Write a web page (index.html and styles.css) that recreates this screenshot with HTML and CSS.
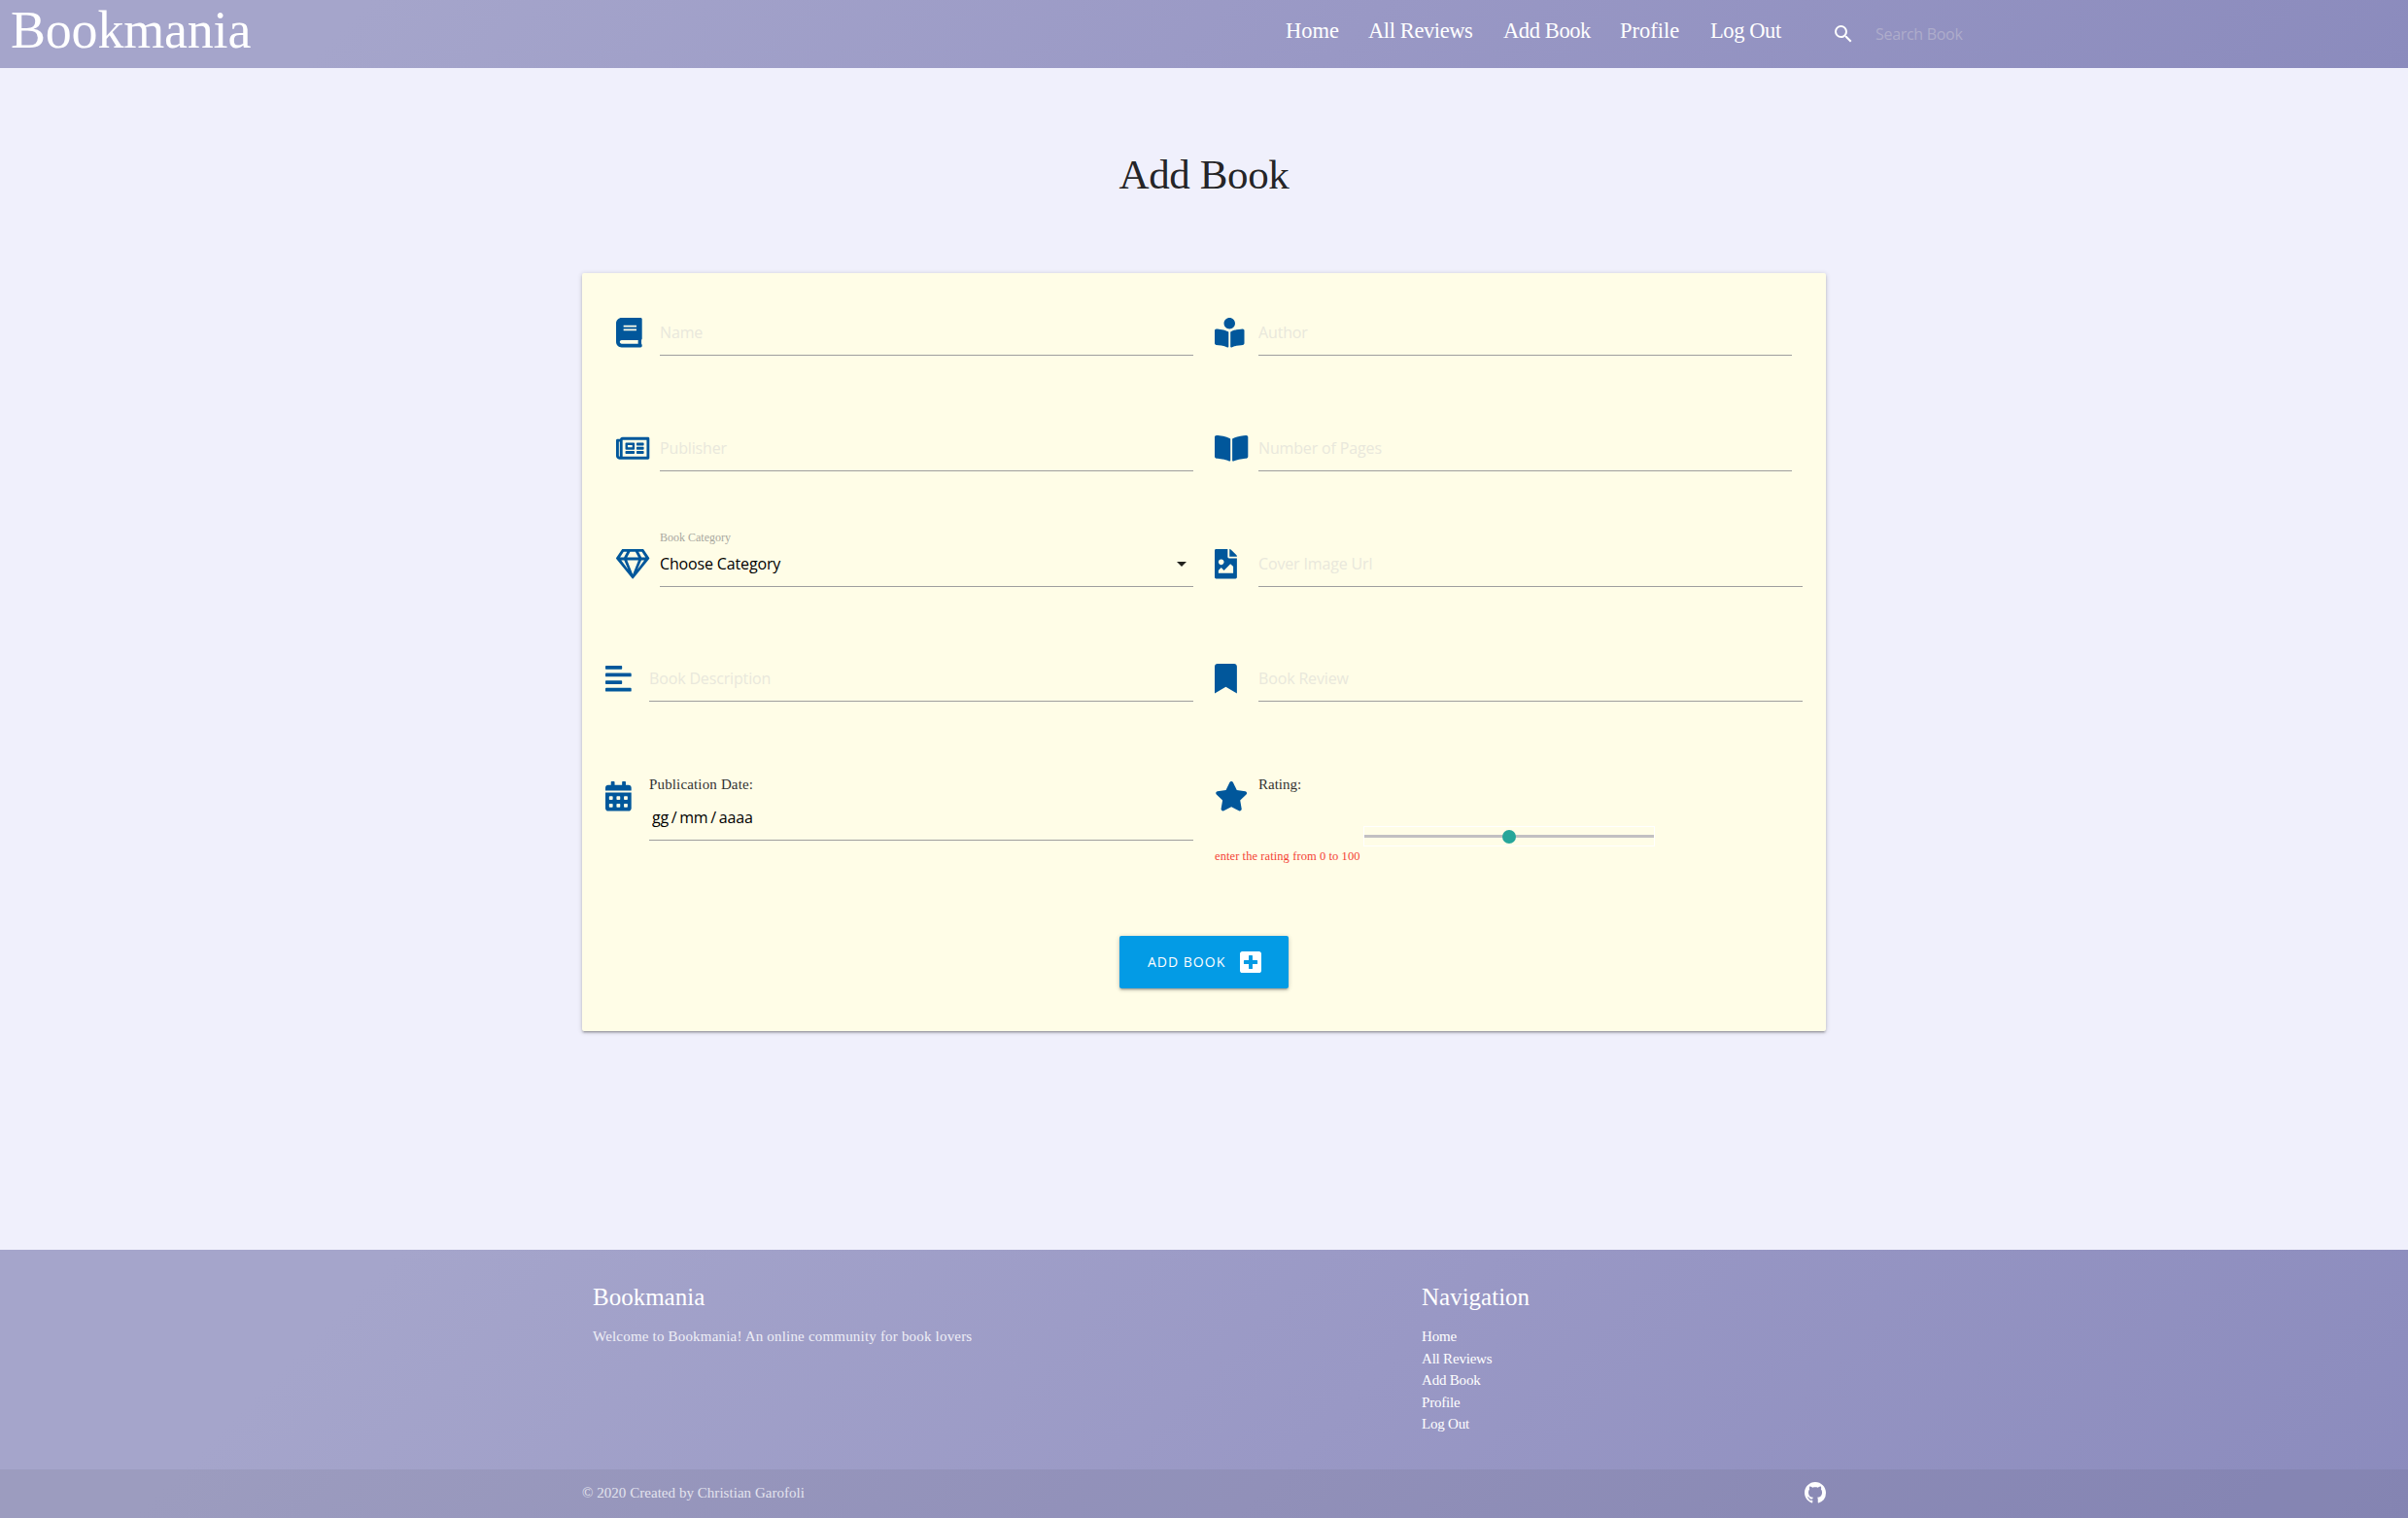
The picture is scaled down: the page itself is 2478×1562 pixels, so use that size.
FILE: index.html
```html
<!DOCTYPE html>
<html lang="en">
<head>
<meta charset="utf-8">
<title>Bookmania - Add Book</title>
<link rel="stylesheet" href="styles.css">
</head>
<body>
<header class="navbar">
  <a class="brand">Bookmania</a>
  <nav class="nav-links">
    <a>Home</a><a class="tight">All Reviews</a><a class="tight">Add Book</a><a>Profile</a><a class="tight">Log Out</a>
  </nav>
  <form class="search">
    <svg class="search-icon" viewBox="0 0 24 24"><path d="M15.5 14h-.79l-.28-.27A6.471 6.471 0 0 0 16 9.5 6.5 6.5 0 1 0 9.5 16c1.61 0 3.09-.59 4.23-1.57l.27.28v.79l5 4.99L20.49 19l-4.99-5zm-6 0C7.01 14 5 11.99 5 9.5S7.01 5 9.5 5 14 7.01 14 9.5 11.99 14 9.5 14z"/></svg>
    <input class="search-input" type="text" placeholder="Search Book">
  </form>
</header>

<main class="main">
  <h1 class="title">Add Book</h1>
  <form class="card">
    <div class="fields">
      <div class="field">
        <svg class="icon" preserveAspectRatio="xMinYMid" viewBox="0 0 448 512"><path d="M448 360V24c0-13.3-10.7-24-24-24H96C43 0 0 43 0 96v320c0 53 43 96 96 96h328c13.3 0 24-10.7 24-24v-16c0-7.5-3.5-14.3-8.9-18.7-4.2-15.4-4.2-59.3 0-74.7 5.4-4.3 8.9-11.1 8.9-18.6zM128 134c0-3.3 2.7-6 6-6h212c3.3 0 6 2.7 6 6v20c0 3.3-2.7 6-6 6H134c-3.3 0-6-2.7-6-6v-20zm0 64c0-3.3 2.7-6 6-6h212c3.3 0 6 2.7 6 6v20c0 3.3-2.7 6-6 6H134c-3.3 0-6-2.7-6-6v-20zm253.4 250H96c-17.7 0-32-14.3-32-32 0-17.6 14.4-32 32-32h285.4c-1.9 17.1-1.9 46.9 0 64z"/></svg>
        <input class="input" type="text" placeholder="Name">
      </div>
      <div class="field">
        <svg class="icon" preserveAspectRatio="xMinYMid" viewBox="0 0 512 512"><path d="M352 96c0-53.02-42.98-96-96-96s-96 42.98-96 96 42.98 96 96 96 96-42.98 96-96zM233.59 241.1c-59.33-36.32-155.43-46.3-203.79-49.05C13.55 191.13 0 203.51 0 219.14v222.8c0 14.33 11.59 26.28 26.49 27.05 43.66 2.29 131.99 10.68 193.04 41.43 9.37 4.72 20.48-1.71 20.48-11.87V252.56c-.01-4.67-2.32-8.95-6.42-11.46zm248.61-49.05c-48.35 2.74-144.46 12.73-203.78 49.05-4.1 2.51-6.41 6.96-6.41 11.63v245.79c0 10.19 11.14 16.63 20.54 11.9 61.04-30.72 149.32-39.11 192.97-41.4 14.9-.78 26.49-12.73 26.49-27.06V219.14c-.01-15.63-13.56-28.01-29.81-27.09z"/></svg>
        <input class="input" type="text" placeholder="Author">
      </div>
      <div class="field">
        <svg class="icon" preserveAspectRatio="xMinYMid" viewBox="0 0 576 512"><path d="M552 64H112c-20.858 0-38.643 13.377-45.248 32H24c-13.255 0-24 10.745-24 24v272c0 30.928 25.072 56 56 56h496c13.255 0 24-10.745 24-24V88c0-13.255-10.745-24-24-24zM48 392V144h16v248c0 4.411-3.589 8-8 8s-8-3.589-8-8zm480 8H111.422c.374-2.614.578-5.283.578-8V112h416v288zM172 280h136c6.627 0 12-5.373 12-12v-96c0-6.627-5.373-12-12-12H172c-6.627 0-12 5.373-12 12v96c0 6.627 5.373 12 12 12zm28-80h80v40h-80v-40zm-40 140v-24c0-6.627 5.373-12 12-12h136c6.627 0 12 5.373 12 12v24c0 6.627-5.373 12-12 12H172c-6.627 0-12-5.373-12-12zm192 0v-24c0-6.627 5.373-12 12-12h104c6.627 0 12 5.373 12 12v24c0 6.627-5.373 12-12 12H364c-6.627 0-12-5.373-12-12zm0-144v-24c0-6.627 5.373-12 12-12h104c6.627 0 12 5.373 12 12v24c0 6.627-5.373 12-12 12H364c-6.627 0-12-5.373-12-12zm0 72v-24c0-6.627 5.373-12 12-12h104c6.627 0 12 5.373 12 12v24c0 6.627-5.373 12-12 12H364c-6.627 0-12-5.373-12-12z"/></svg>
        <input class="input" type="text" placeholder="Publisher">
      </div>
      <div class="field">
        <svg class="icon" preserveAspectRatio="xMinYMid" viewBox="0 0 576 512"><path d="M542.22 32.05c-54.8 3.11-163.72 14.43-230.96 55.59-4.64 2.84-7.27 7.89-7.27 13.17v363.87c0 11.55 12.63 18.85 23.28 13.49 69.18-34.82 169.23-44.32 218.7-46.92 16.89-.89 30.02-14.43 30.02-30.66V62.75c.01-17.71-15.35-31.74-33.77-30.7zM264.73 87.64C197.5 46.48 88.58 35.17 33.78 32.05 15.36 31.01 0 45.04 0 62.75V400.6c0 16.24 13.13 29.78 30.02 30.66 49.49 2.6 149.59 12.11 218.77 46.95 10.62 5.35 23.21-1.94 23.21-13.46V100.63c0-5.29-2.62-10.14-7.27-12.99z"/></svg>
        <input class="input" type="text" placeholder="Number of Pages">
      </div>
      <div class="field">
        <svg class="icon" preserveAspectRatio="xMinYMid" viewBox="0 0 576 512"><path d="M464 0H112c-4 0-7.7 2-9.9 5.4L2 152.2c-2.8 4.2-2.6 9.7.6 13.6l276 342.2c4.8 6 14 6 18.8 0l276-342.2c3.2-3.9 3.4-9.4.6-13.6L473.9 5.4C471.7 2 468 0 464 0zm-19.3 48l63.3 96h-68.4l-51.7-96h56.8zm-202.1 0h90.7l51.7 96H191l51.6-96zm-111.3 0h56.8l-51.7 96H68l63.3-96zm-43 144h51.4L208 352 88.3 192zm102.9 0h193.6L288 435.3 191.2 192zM368 352l68.2-160h51.4L368 352z"/></svg>
        <div class="select">
          <label class="select-label">Book Category</label>
          <div class="select-box">
            <span>Choose Category</span>
            <svg class="caret" viewBox="0 0 24 24"><path d="M7 10l5 5 5-5z"/></svg>
          </div>
        </div>
      </div>
      <div class="field flush-right">
        <svg class="icon" preserveAspectRatio="xMinYMid" viewBox="0 0 384 512"><path d="M384 121.941V128H256V0h6.059a24 24 0 0 1 16.97 7.029l97.941 97.941a24.002 24.002 0 0 1 7.03 16.971zM248 160c-13.2 0-24-10.8-24-24V0H24C10.745 0 0 10.745 0 24v464c0 13.255 10.745 24 24 24h336c13.255 0 24-10.745 24-24V160H248zm-135.455 16c26.51 0 48 21.49 48 48s-21.49 48-48 48-48-21.49-48-48 21.491-48 48-48zm208 240h-256l.485-48.485L104.545 328c4.686-4.686 11.799-4.201 16.485.485L160.545 368 264.06 264.485c4.686-4.686 12.284-4.686 16.971 0L320.545 304v112z"/></svg>
        <input class="input" type="text" placeholder="Cover Image Url">
      </div>
      <div class="field flush-left">
        <svg class="icon" preserveAspectRatio="xMinYMid" viewBox="0 0 448 512"><path d="M12.83 352h262.34A12.82 12.82 0 0 0 288 339.17v-38.34A12.82 12.82 0 0 0 275.17 288H12.83A12.82 12.82 0 0 0 0 300.83v38.34A12.82 12.82 0 0 0 12.83 352zm0-256h262.34A12.82 12.82 0 0 0 288 83.17V44.83A12.82 12.82 0 0 0 275.17 32H12.83A12.82 12.82 0 0 0 0 44.83v38.34A12.82 12.82 0 0 0 12.83 96zM432 160H16a16 16 0 0 0-16 16v32a16 16 0 0 0 16 16h416a16 16 0 0 0 16-16v-32a16 16 0 0 0-16-16zm0 256H16a16 16 0 0 0-16 16v32a16 16 0 0 0 16 16h416a16 16 0 0 0 16-16v-32a16 16 0 0 0-16-16z"/></svg>
        <input class="input" type="text" placeholder="Book Description">
      </div>
      <div class="field flush-right">
        <svg class="icon" preserveAspectRatio="xMinYMid" viewBox="0 0 384 512"><path d="M0 512V48C0 21.49 21.49 0 48 0h288c26.51 0 48 21.49 48 48v464L192 400 0 512z"/></svg>
        <input class="input" type="text" placeholder="Book Review">
      </div>
      <div class="field flush-left field-tall">
        <svg class="icon" preserveAspectRatio="xMinYMid" viewBox="0 0 448 512"><path fill-rule="evenodd" d="M0 464c0 26.500 21.500 48 48 48h352c26.500 0 48-21.500 48-48V192H0zM332 256h40a12 12 0 0 1 12 12v40a12 12 0 0 1-12 12h-40a12 12 0 0 1-12-12v-40a12 12 0 0 1 12-12zm0 128h40a12 12 0 0 1 12 12v40a12 12 0 0 1-12 12h-40a12 12 0 0 1-12-12v-40a12 12 0 0 1 12-12zM204 256h40a12 12 0 0 1 12 12v40a12 12 0 0 1-12 12h-40a12 12 0 0 1-12-12v-40a12 12 0 0 1 12-12zm0 128h40a12 12 0 0 1 12 12v40a12 12 0 0 1-12 12h-40a12 12 0 0 1-12-12v-40a12 12 0 0 1 12-12zM76 256h40a12 12 0 0 1 12 12v40a12 12 0 0 1-12 12H76a12 12 0 0 1-12-12v-40a12 12 0 0 1 12-12zm0 128h40a12 12 0 0 1 12 12v40a12 12 0 0 1-12 12H76a12 12 0 0 1-12-12v-40a12 12 0 0 1 12-12zM400 64h-48V16c0-8.800-7.200-16-16-16h-32c-8.800 0-16 7.200-16 16v48H160V16c0-8.800-7.200-16-16-16h-32c-8.800 0-16 7.200-16 16v48H48C21.500 64 0 85.500 0 112v48h448v-48c0-26.500-21.500-48-48-48z"/></svg>
        <div class="date">
          <label class="label label-date">Publication Date:</label>
          <input class="input input-date" type="text" value="gg / mm / aaaa">
        </div>
      </div>
      <div class="field flush-right field-tall rating">
        <div class="rating-head">
          <svg class="icon" preserveAspectRatio="xMinYMid" viewBox="0 0 576 512"><path d="M259.300 17.800L194 150.200 47.900 171.500c-26.200 3.800-36.700 36.100-17.700 54.600l105.700 103-25 145.500c-4.500 26.300 23.200 46 46.400 33.700L288 439.600l130.700 68.700c23.200 12.200 50.900-7.400 46.400-33.700l-25-145.500 105.700-103c19-18.500 8.500-50.800-17.700-54.600L382 150.200 316.700 17.800c-11.700-23.600-45.600-23.900-57.400 0z"/></svg>
          <label class="label">Rating:</label>
        </div>
        <div class="rating-body">
          <span class="helper">enter the rating from 0 to 100</span>
          <div class="range"><div class="thumb"></div></div>
        </div>
      </div>
    </div>
    <button class="submit" type="button">
      <span>ADD BOOK</span>
      <svg class="submit-icon" viewBox="0 32 448 448"><path d="M400 32H48C21.500 32 0 53.500 0 80v352c0 26.500 21.500 48 48 48h352c26.500 0 48-21.500 48-48V80c0-26.500-21.500-48-48-48zm-32 252c0 6.600-5.400 12-12 12h-92v92c0 6.600-5.400 12-12 12h-56c-6.600 0-12-5.400-12-12v-92H92c-6.600 0-12-5.400-12-12v-56c0-6.600 5.400-12 12-12h92v-92c0-6.600 5.400-12 12-12h56c6.600 0 12 5.400 12 12v92h92c6.600 0 12 5.400 12 12v56z"/></svg>
    </button>
  </form>
</main>

<footer class="footer">
  <div class="footer-main">
    <section class="about">
      <h2 class="footer-title">Bookmania</h2>
      <p class="about-text">Welcome to Bookmania! An online community for book lovers</p>
    </section>
    <section>
      <h2 class="footer-title">Navigation</h2>
      <ul class="footer-links">
        <li>Home</li><li>All Reviews</li><li>Add Book</li><li>Profile</li><li>Log Out</li>
      </ul>
    </section>
  </div>
  <div class="copyright">
    <div class="copyright-inner">
      <span>© 2020 Created by Christian Garofoli</span>
      <svg class="github" viewBox="0 0 16 16"><path d="M8 0C3.580 0 0 3.580 0 8c0 3.540 2.290 6.530 5.470 7.590.4.070.55-.17.55-.38 0-.19-.01-.82-.01-1.490-2.010.37-2.530-.49-2.690-.94-.09-.23-.48-.94-.82-1.130-.28-.15-.68-.52-.01-.53.63-.01 1.080.58 1.230.82.72 1.210 1.870.87 2.330.66.07-.52.28-.87.51-1.070-1.780-.2-3.640-.89-3.640-3.950 0-.87.31-1.590.82-2.150-.08-.2-.36-1.020.08-2.120 0 0 .67-.21 2.200.82.64-.18 1.320-.27 2-.27.68 0 1.360.09 2 .27 1.530-1.040 2.200-.82 2.200-.82.44 1.100.16 1.920.08 2.120.51.56.82 1.270.82 2.150 0 3.070-1.870 3.750-3.650 3.950.29.25.54.73.54 1.480 0 1.070-.01 1.930-.01 2.200 0 .21.15.46.55.38A8.013 8.013 0 0016 8c0-4.420-3.580-8-8-8z"/></svg>
    </div>
  </div>
</footer>
</body>
</html>
```
FILE: styles.css
```css
* { box-sizing: border-box; }

body {
  margin: 0;
  min-height: 1562px;
  display: flex;
  flex-direction: column;
  background: #f0f0fc;
  color: rgba(0, 0, 0, 0.87);
  font: 15px/22.5px "Liberation Serif", serif;
}

h1, h2, p, ul { margin: 0; padding: 0; font-weight: 400; }

/* Navigation bar */
.navbar {
  display: flex;
  height: 70px;
  padding-left: 11px;
  background: linear-gradient(135deg, #a5a5cb 15%, #9998c5 56%, #8b8bbd 100%);
  color: #fff;
}
.brand { font-size: 54px; line-height: 62px; letter-spacing: -0.2px; }
.nav-links {
  display: grid;
  grid-template-columns: 85px 139px 120px 93px 103px;
  margin-left: auto;
  font-size: 22.500px;
  line-height: 64px;
  white-space: nowrap;
}
.nav-links a { padding-left: 15px; }
.nav-links .tight { letter-spacing: -0.4px; }
.search { display: flex; width: 630px; padding: 23px 0 0 37px; }
.search-icon { width: 24px; height: 24px; fill: #fff; }
.search-input {
  width: 500px;
  height: 24px;
  margin-left: 21px;
  padding: 0;
  border: 0;
  outline: 0;
  background: none;
  font: 16px "Open Sans", sans-serif;
  letter-spacing: -0.3px;
}
.search-input::placeholder { color: #aeaccb; opacity: 1; }

/* Form card */
.main { width: 1280px; margin: 0 auto; flex: 1; }
.title {
  height: 211px;
  padding-top: 86px;
  font-size: 43px;
  line-height: 48px;
  letter-spacing: -0.4px;
  text-align: center;
}
.card {
  height: 780px;
  padding: 24px;
  background: #fffde7;
  border-radius: 2px;
  box-shadow: 0 2px 2px 0 rgba(0,0,0,.14), 0 3px 1px -2px rgba(0,0,0,.12), 0 1px 5px 0 rgba(0,0,0,.2);
}
.fields {
  display: grid;
  grid-template-columns: 1fr 1fr;
  grid-template-rows: 119px 119px 118px 119px 183px;
}
.field { display: flex; align-items: flex-start; padding: 15px 11px 0; }
.flush-left { padding-left: 0; }
.flush-right { padding-right: 0; }
.icon {
  flex: none;
  width: 45px;
  height: 30.500px;
  margin-top: 7px;
  fill: #01579b;
}
.input, .select-box {
  flex: 1;
  min-width: 0;
  height: 46px;
  padding: 0 0 2px;
  border: 0;
  border-bottom: 1px solid #9e9e9e;
  outline: 0;
  background: none;
  color: #000;
  font: 16px "Open Sans", sans-serif;
  letter-spacing: -0.15px;
}
.input::placeholder { color: #e9e8dc; opacity: 1; }
.select { flex: 1; margin-top: -15px; }
.select-label {
  display: block;
  height: 15px;
  font-size: 12px;
  line-height: 20px;
  color: #a8a8a0;
}
.select-box { display: flex; align-items: center; justify-content: space-between; }
.caret { width: 24px; height: 24px; fill: rgba(0, 0, 0, .87); }

.field-tall { padding-top: 16px; }
.field-tall .icon { margin-top: 8px; }
.label { display: block; color: #333; }
.date { display: flex; flex: 1; flex-direction: column; }
.label-date { letter-spacing: 0.15px; }
.input-date { flex: none; padding-left: 3px; word-spacing: -1.300px; }
.date .label { height: 23px; }
.rating { display: block; }
.rating-head { display: flex; height: 54px; }
.rating-body { display: flex; }
.helper {
  width: 153px;
  padding-top: 20px;
  font-size: 12.500px;
  letter-spacing: 0.08px;
  color: #f44336;
  white-space: nowrap;
}
.range {
  display: flex;
  align-items: center;
  justify-content: center;
  width: 300px;
  height: 21px;
  border: 1px solid #fff;
  background: linear-gradient(#c2c0c2, #c2c0c2) 0 8px / 100% 3px no-repeat;
}
.thumb { width: 14px; height: 14px; border-radius: 50%; background: #26a69a; }

.submit {
  display: flex;
  align-items: center;
  gap: 15px;
  width: 174px;
  height: 54px;
  margin: 0 auto;
  padding: 0 0 1px 29px;
  border: 0;
  border-radius: 2px;
  background: #039be5;
  box-shadow: 0 2px 2px 0 rgba(0,0,0,.14), 0 3px 1px -2px rgba(0,0,0,.12), 0 1px 5px 0 rgba(0,0,0,.2);
  color: #fff;
  font: 14px "Open Sans", sans-serif;
  letter-spacing: 1px;
  white-space: nowrap;
}
.submit-icon { flex: none; width: 22px; height: 22px; fill: #fff; }

/* Footer */
.footer {
  height: 276px;
  background: linear-gradient(135deg, #a5a5cb 15%, #9998c5 56%, #8b8bbd 100%);
  color: #fff;
}
.footer-main {
  display: grid;
  grid-template-columns: 853px 1fr;
  width: 1280px;
  height: 226px;
  margin: 0 auto;
  padding: 35px 11px 0;
}
.footer-title { margin-bottom: 15px; font-size: 25px; line-height: 28px; }
.about-text { color: #eeeef6; letter-spacing: 0.19px; }
.footer-links { list-style: none; letter-spacing: -0.2px; }
.copyright { height: 50px; background: rgba(51, 51, 51, .08); }
.copyright-inner {
  display: flex;
  align-items: center;
  justify-content: space-between;
  width: 1280px;
  height: 48px;
  margin: 0 auto;
  color: #e3e3ee;
  letter-spacing: 0.04px;
}
.github { width: 22px; height: 22px; fill: #fff; }
```
